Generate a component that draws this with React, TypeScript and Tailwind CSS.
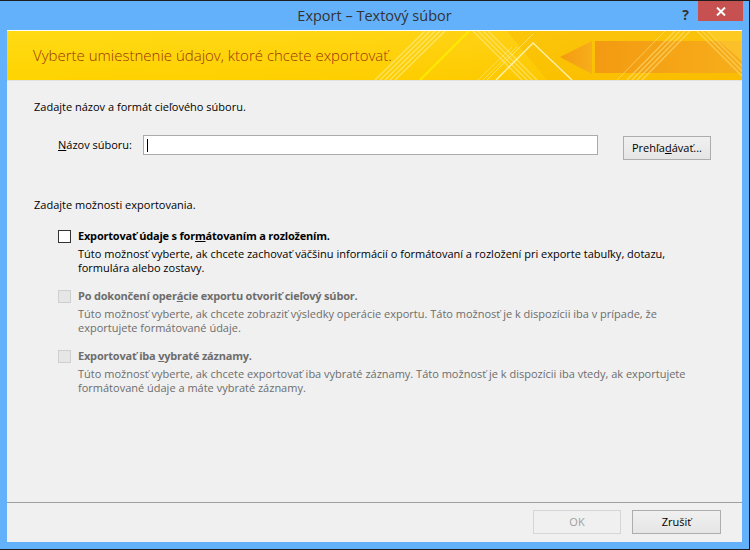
import React from "react";

const FONT = { fontFamily: '"Segoe UI", "Open Sans", "Noto Sans", sans-serif' };

function Banner() {
  return (
    <div className="relative h-[49px] bg-gradient-to-r from-[#ffd800] via-[#ffd200] to-[#fcc400] overflow-hidden">
      <svg className="absolute inset-0" width="735" height="49" viewBox="0 0 735 49">
        <defs>
          <linearGradient id="arrowG" x1="0" y1="0" x2="1" y2="0">
            <stop offset="0" stopColor="#f39a12" />
            <stop offset="1" stopColor="#f7ae1a" />
          </linearGradient>
          <linearGradient id="vert" x1="0" y1="0" x2="0" y2="1">
            <stop offset="0" stopColor="#ffffff" stopOpacity="0.08" />
            <stop offset="1" stopColor="#f0a000" stopOpacity="0.08" />
          </linearGradient>
        </defs>
        <rect x="0" y="0" width="735" height="49" fill="url(#vert)" />
        <polygon points="500,0 735,0 735,49 540,49" fill="#f8b800" opacity="0.45" />
        {[0, 5, 10, 15, 20].map((d) => (
          <line key={"a" + d} x1={368 + d} y1={49} x2={418 + d} y2={0} stroke="#fff3a0" strokeWidth="1.5" opacity="0.55" />
        ))}
        <line x1={413} y1={49} x2={462} y2={0} stroke="#ffee00" strokeWidth="2" opacity="0.9" />
        {[0, 5, 10, 15].map((d) => (
          <line key={"b" + d} x1={466 + d} y1={0} x2={515 + d} y2={49} stroke="#fff0a0" strokeWidth="1.5" opacity="0.5" />
        ))}
        <polyline points="489,49 526,12 565,49" fill="none" stroke="#fff6c0" strokeWidth="1.5" opacity="0.85" />
        <polyline points="480,49 517,12 526,3" fill="none" stroke="#fff6c0" strokeWidth="1" opacity="0.5" />
        <polyline points="476,49 510,16" fill="none" stroke="#fff0a0" strokeWidth="1" opacity="0.5" />
        <polyline points="471,49 505,16" fill="none" stroke="#fff0a0" strokeWidth="1" opacity="0.5" />
        <polygon points="553,26 585,10 585,43" fill="url(#arrowG)" />
        <rect x="588" y="10" width="147" height="32" fill="url(#arrowG)" />
        {[0, 5, 10, 15].map((d) => (
          <line key={"c" + d} x1={620 + d} y1={49} x2={668 + d} y2={0} stroke="#ffe680" strokeWidth="1.5" opacity="0.55" />
        ))}
        <line x1={610} y1={49} x2={658} y2={0} stroke="#ffe680" strokeWidth="1" opacity="0.6" />
        {[0, 5, 10].map((d) => (
          <line key={"d" + d} x1={690 + d} y1={0} x2={735 + d} y2={45} stroke="#ffe680" strokeWidth="1.5" opacity="0.5" />
        ))}
        <polygon points="700,0 735,0 735,30" fill="#ffd43a" opacity="0.5" />
      </svg>
      <div className="relative h-full flex items-center pl-[26px]">
        <span className="text-[#9a360c] text-[15px] font-light" style={FONT}>
          Vyberte umiestnenie údajov, ktoré chcete exportovať.
        </span>
      </div>
    </div>
  );
}

function Check({ disabled }: { disabled?: boolean }) {
  return (
    <div
      className={
        "w-[13px] h-[13px] shrink-0 border " +
        (disabled ? "border-[#cfcfcf] bg-[#e6e6e6]" : "border-[#333] bg-white")
      }
    />
  );
}

function Option({
  label,
  lines,
  disabled,
}: {
  label: React.ReactNode;
  lines: string[];
  disabled?: boolean;
}) {
  const color = disabled ? "text-[#6d6d6d]" : "text-black";
  return (
    <div className="flex flex-col">
      <div className="flex items-center h-[16px] pl-[24px] gap-[7px]">
        <Check disabled={disabled} />
        <span className={"font-bold text-[11px] leading-[16px] tracking-[-0.2px] " + color}>{label}</span>
      </div>
      <div className={"pl-[44px] mt-[3px] text-[11px] leading-[14px] " + color}>
        {lines.map((l, i) => (
          <div key={i}>{l}</div>
        ))}
      </div>
    </div>
  );
}

export default function App() {
  return (
    <div
      className="w-[750px] h-[550px] bg-[#63b1fb] border-t border-r border-b border-[#1e1e1e] flex flex-col"
      style={FONT}
    >
      {/* title bar */}
      <div className="relative h-[29px] flex items-center justify-center">
        <span className="text-[14.5px] text-[#333] pt-[1px]">Export – Textový súbor</span>
        <span className="absolute right-[60px] top-[3px] text-[14px] font-bold text-[#333]">?</span>
        <div className="absolute right-[6px] top-0 w-[45px] h-[20px] bg-[#c75050] flex items-center justify-center">
          <svg width="10" height="9" viewBox="0 0 10 9">
            <path d="M1 0.5 L9 8.5 M9 0.5 L1 8.5" stroke="white" strokeWidth="2" />
          </svg>
        </div>
      </div>
      {/* content */}
      <div className="ml-[7px] w-[735px] flex-1 bg-[#f0f0f0] border-t border-white flex flex-col">
        <Banner />
        <div className="flex-1 border-t border-[#e2e2e2] pl-[27px] pt-[18px] text-[11px] text-black">
          <div className="h-[16px] leading-[16px]">Zadajte názov a formát cieľového súboru.</div>
          <div className="flex items-start mt-[20px] h-[25px]">
            <div className="w-[109px] pl-[24px] h-[20px] flex items-center">
              <span>
                <span className="underline">N</span>ázov súboru:
              </span>
            </div>
            <div className="w-[455px] h-[20px] bg-white border border-[#ababab] flex items-center pl-[3px]">
              <div className="w-[1px] h-[13px] bg-black" />
            </div>
            <button className="ml-[25px] mt-[1px] w-[88px] h-[24px] border border-[#adadad] bg-gradient-to-b from-[#f0f0f0] to-[#e5e5e5] text-[11px] flex items-center justify-center">
              <span>
                Prehľa<span className="underline">d</span>ávať...
              </span>
            </button>
          </div>
          <div className="mt-[37px] h-[16px] leading-[16px]">Zadajte možnosti exportovania.</div>
          <div className="mt-[15px] flex flex-col gap-[13px]">
            <Option
              label={
                <>
                  Exportovať údaje s for<span className="underline">m</span>átovaním a rozložením.
                </>
              }
              lines={[
                "Túto možnosť vyberte, ak chcete zachovať väčšinu informácií o formátovaní a rozložení pri exporte tabuľky, dotazu,",
                "formulára alebo zostavy.",
              ]}
            />
            <Option
              disabled
              label={
                <>
                  Po dokončení oper<span className="underline">á</span>cie exportu otvoriť cieľový súbor.
                </>
              }
              lines={[
                "Túto možnosť vyberte, ak chcete zobraziť výsledky operácie exportu. Táto možnosť je k dispozícii iba v prípade, že",
                "exportujete formátované údaje.",
              ]}
            />
            <Option
              disabled
              label={
                <>
                  Exportovať iba <span className="underline">v</span>ybraté záznamy.
                </>
              }
              lines={[
                "Túto možnosť vyberte, ak chcete exportovať iba vybraté záznamy. Táto možnosť je k dispozícii iba vtedy, ak exportujete",
                "formátované údaje a máte vybraté záznamy.",
              ]}
            />
          </div>
        </div>
        {/* footer */}
        <div className="h-[40px] border-t border-[#a0a0a0] flex justify-end items-start pt-[7px] pr-[21px] gap-[11px]">
          <button className="w-[88px] h-[24px] border border-[#d5d5d5] bg-[#f0f0f0] text-[11px] text-[#a0a0a0]">
            OK
          </button>
          <button className="w-[89px] h-[24px] border border-[#adadad] bg-gradient-to-b from-[#f0f0f0] to-[#e5e5e5] text-[11px] text-black">
            Zrušiť
          </button>
        </div>
      </div>
      <div className="h-[7px]" />
    </div>
  );
}
